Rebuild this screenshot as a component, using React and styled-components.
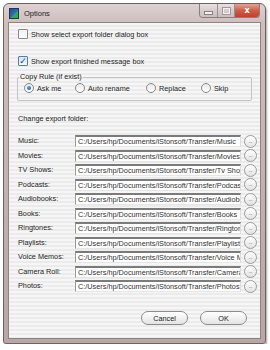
import React from "react";
import styled, {createGlobalStyle} from "styled-components";

const GlobalStyle = createGlobalStyle`
  html, body {
    margin: 0;
    padding: 0;
    background: #ffffff;
  }
  body {
    font-family: "Liberation Sans", Arial, sans-serif;
    font-size: 7.3px;
    color: #1f1f1f;
  }
`;

const Window = styled.div`
  margin: 3px 0 0 3px;
  width: 263px;
  height: 341px;
  box-sizing: border-box;
  border: 1px solid #6f6262;
  border-radius: 6px 6px 3px 3px;
  background: linear-gradient(to bottom, #ddd2d2 0px, #cdbdbd 20px, #b9a6a6 100%);
  box-shadow: 1px 2px 2px rgba(0, 0, 0, 0.35);
  padding: 0 4px 4px 4px;
  display: flex;
  flex-direction: column;
`;

const TitleBar = styled.div`
  height: 18px;
  display: flex;
  align-items: flex-start;
`;

const TitleIcon = styled.div`
  width: 8px;
  height: 9px;
  margin: 4px 5px 0 1px;
  background: linear-gradient(135deg, #1f4f8f 0%, #2e6fb8 55%, #37a84a 56%, #37a84a 100%);
  border: 1px solid #23364f;
`;

const Title = styled.span`
  margin-top: 5px;
  font-size: 7.5px;
  color: #222;
`;

const Spacer = styled.div`
  flex: 1;
`;

const CaptionGroup = styled.div`
  display: flex;
  height: 13px;
  border: 1px solid #8a7d7d;
  border-top: none;
  border-radius: 0 0 4px 4px;
  overflow: hidden;
  margin-right: 1px;
`;

const Caption = styled.div`
  width: ${p => p.$w}px;
  height: 13px;
  display: flex;
  align-items: center;
  justify-content: center;
  background: ${p => p.$close
    ? "linear-gradient(to bottom, #e6a296 0%, #cf5d48 50%, #c0412c 100%)"
    : "linear-gradient(to bottom, #e9e2e2 0%, #d6cccc 50%, #cbbebe 100%)"};
  border-left: ${p => p.$first ? "none" : "1px solid #9d8f8f"};
  color: #fff;
  font-size: 8px;
  font-weight: bold;
  font-family: "DejaVu Sans", sans-serif;
`;

const MinGlyph = styled.div`
  width: 7px;
  height: 2px;
  margin-top: 4px;
  background: #f4f0f0;
  border: 1px solid #8d8080;
`;

const MaxGlyph = styled.div`
  width: 5px;
  height: 4px;
  border: 1px solid #f4f0f0;
  outline: 1px solid #a59898;
`;

const Client = styled.div`
  flex: 1;
  border: 1px solid #8e8282;
  background-color: #f3f3f3;
  background-image: repeating-linear-gradient(to bottom, #f6f6f6 0px, #f6f6f6 2px, #ebebeb 2px, #ebebeb 4px);
  padding: 5px 0 0 9px;
  display: flex;
  flex-direction: column;
`;

const CheckRow = styled.label`
  display: flex;
  align-items: center;
  height: 12px;
  gap: 3px;
  margin-bottom: ${p => p.$mb || 0}px;
`;

const CheckBox = styled.span`
  width: 8px;
  height: 8px;
  border: 1px solid ${p => p.$on ? "#5a7cae" : "#8a8a8a"};
  border-radius: 1px;
  background: ${p => p.$on
    ? "linear-gradient(to bottom, #d5e6f7, #f3f8fd)"
    : "linear-gradient(to bottom, #f0f0f0, #ffffff)"};
  display: flex;
  align-items: center;
  justify-content: center;
  color: #1b3f8f;
  font-family: "DejaVu Sans", sans-serif;
  font-size: 9px;
  font-weight: bold;
  line-height: 8px;
`;

const GroupBox = styled.fieldset`
  margin: 6px 8px 0 -1px;
  padding: 1px 0 0 6px;
  border: 1px solid #c4c4c4;
  border-radius: 2px;
  height: 28px;
  box-sizing: border-box;
  display: flex;
`;

const Legend = styled.legend`
  padding: 0 1px;
  margin-left: -5px;
  font-size: 7.3px;
  line-height: 8px;
`;

const RadioRow = styled.div`
  display: flex;
  align-items: center;
  height: 12px;
`;

const RadioItem = styled.span`
  display: flex;
  align-items: center;
  gap: 3px;
  width: ${p => p.$w}px;
`;

const Radio = styled.span`
  width: 8px;
  height: 8px;
  border-radius: 50%;
  border: 1px solid #888;
  background: linear-gradient(to bottom, #e9e9e9, #ffffff);
  display: flex;
  align-items: center;
  justify-content: center;

  &::after {
    content: "";
    display: ${p => p.$on ? "block" : "none"};
    width: 4px;
    height: 4px;
    border-radius: 50%;
    background: radial-gradient(circle at 40% 35%, #5da0ea, #1a4fa5);
  }
`;

const SectionLabel = styled.div`
  height: 12px;
  line-height: 12px;
  margin-top: 12px;
`;

const FolderList = styled.div`
  margin-top: 10px;
  display: grid;
  grid-template-columns: 57px 166px 14px;
  grid-auto-rows: 12px;
  row-gap: 2.5px;
  align-items: center;
`;

const FolderLabel = styled.span`
  line-height: 12px;
`;

const PathField = styled.div`
  height: 12px;
  box-sizing: border-box;
  background: #ffffff;
  border-top: 2px solid #7b7b7b;
  border-left: 1px solid #9a9a9a;
  border-right: 1px solid #dcdcdc;
  border-bottom: 1px solid #e6e6e6;
  padding-left: 2px;
  overflow: hidden;
  white-space: nowrap;
  font-size: 7.3px;
  line-height: 9px;
  color: #333;
`;

const BrowseButton = styled.span`
  width: 11px;
  height: 11px;
  margin-left: 3px;
  border-radius: 50%;
  border: 1px solid #9b9b9b;
  background: linear-gradient(to bottom, #ffffff, #e2e2e2);
  display: flex;
  align-items: center;
  justify-content: center;
  font-size: 5px;
  line-height: 5px;
  letter-spacing: -0.3px;
  color: #444;
`;

const Footer = styled.div`
  display: flex;
  justify-content: flex-end;
  gap: 12px;
  margin-top: 19px;
  padding-right: 13px;
`;

const PillButton = styled.button`
  width: 47px;
  height: 14px;
  padding: 0;
  border-radius: 8px;
  border: 1px solid #8c8c8c;
  background: linear-gradient(to bottom, #ffffff 0%, #f2f2f2 50%, #e3e3e3 100%);
  font-family: "Liberation Sans", Arial, sans-serif;
  font-size: 7.3px;
  color: #222;
`;

const folders = [
    ["Music:", "Music"],
    ["Movies:", "Movies"],
    ["TV Shows:", "Tv Shows"],
    ["Podcasts:", "Podcasts"],
    ["Audiobooks:", "Audiobooks"],
    ["Books:", "Books"],
    ["Ringtones:", "Ringtones"],
    ["Playlists:", "Playlists"],
    ["Voice Memos:", "Voice Memos"],
    ["Camera Roll:", "Camera Roll"],
    ["Photos:", "Photos"],
];

const rules = [
    {label: "Ask me", w: 51, on: true},
    {label: "Auto rename", w: 71},
    {label: "Replace", w: 55},
    {label: "Skip", w: 40},
];

export default function App() {
    return (
        <>
            <GlobalStyle/>
            <Window>
                <TitleBar>
                    <TitleIcon/>
                    <Title>Options</Title>
                    <Spacer/>
                    <CaptionGroup>
                        <Caption $w={17} $first><MinGlyph/></Caption>
                        <Caption $w={16}><MaxGlyph/></Caption>
                        <Caption $w={24} $close>x</Caption>
                    </CaptionGroup>
                </TitleBar>
                <Client>
                    <CheckRow $mb={15}>
                        <CheckBox/>
                        Show select export folder dialog box
                    </CheckRow>
                    <CheckRow>
                        <CheckBox $on>✓</CheckBox>
                        Show export finished message box
                    </CheckRow>
                    <GroupBox>
                        <Legend>Copy Rule (if exist)</Legend>
                        <RadioRow>
                            {rules.map(r => (
                                <RadioItem key={r.label} $w={r.w}>
                                    <Radio $on={r.on}/>
                                    {r.label}
                                </RadioItem>
                            ))}
                        </RadioRow>
                    </GroupBox>
                    <SectionLabel>Change export folder:</SectionLabel>
                    <FolderList>
                        {folders.map(([label, dir]) => (
                            <React.Fragment key={label}>
                                <FolderLabel>{label}</FolderLabel>
                                <PathField>C:/Users/hp/Documents/iStonsoft/Transfer/{dir}</PathField>
                                <BrowseButton>...</BrowseButton>
                            </React.Fragment>
                        ))}
                    </FolderList>
                    <Footer>
                        <PillButton>Cancel</PillButton>
                        <PillButton>OK</PillButton>
                    </Footer>
                </Client>
            </Window>
        </>
    );
}
